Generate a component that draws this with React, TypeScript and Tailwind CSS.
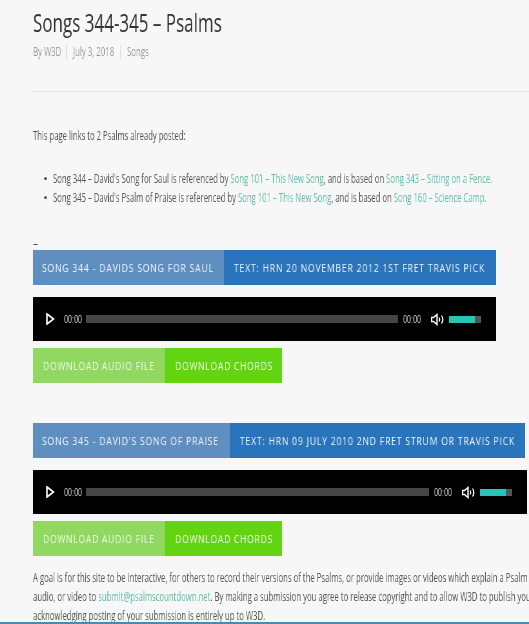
import React from 'react';

interface SongBlockProps {
  title: string;
  text: string;
  barWidth: string;
  titleWidth: string;
  playerWidth: string;
  className?: string;
}

// the source page is squeezed sideways, so text gets narrowed with scale-x
const Player: React.FC<{ width: string }> = ({ width }) => (
  <div className={`${width} h-[44px] bg-black flex items-center pl-[13px] pr-[15px] font-['Liberation_Sans',sans-serif] text-[10px] text-[#cfcfcf] mt-[12px]`}>
    {/* play button */}
    <svg width="9" height="12" viewBox="0 0 9 12" fill="none" stroke="#fff" strokeWidth="1.6" className="shrink-0">
      <path d="M1 1l6.5 5L1 11z" />
    </svg>
    <span className="ml-[9px] w-[18px] shrink-0"><span className="block w-max origin-left scale-x-[0.72] will-change-transform">00:00</span></span>
    <div className="ml-[4px] flex-1 h-[8px] bg-[#454545]"></div>
    <span className="ml-[5px] w-[18px] shrink-0"><span className="block w-max origin-left scale-x-[0.72] will-change-transform">00:00</span></span>
    {/* speaker */}
    <svg width="13" height="13" viewBox="0 0 13 13" fill="none" className="ml-[10px] shrink-0">
      <path d="M0.500 4.500h2L6 1.500v10L2.500 8.500h-2z" stroke="#fff" strokeWidth="1.400" />
      <path d="M8 4.500c.8 1.200.8 2.800 0 4M10.500 2.500c1.600 2.400 1.600 5.600 0 8" stroke="#fff" strokeWidth="1.200" />
    </svg>
    <div className="ml-[5px] w-[32px] h-[7px] bg-[#555] shrink-0">
      <div className="w-[26px] h-full bg-[#27c4b8]"></div>
    </div>
  </div>
);

const SongBlock: React.FC<SongBlockProps> = ({ title, text, barWidth, titleWidth, playerWidth, className }) => (
  <div className={className}>
    <div className={`${barWidth} h-[35px] flex bg-[#2a74bc] text-[#f0f5fa] text-[11px] font-medium tracking-[1.05px] font-['Open_Sans',sans-serif] whitespace-nowrap leading-[35px]`}>
      <div className={`${titleWidth} shrink-0 bg-[#5f8fc0] pl-[9px]`}><span className="block w-max origin-left scale-x-[0.78] will-change-transform">{title}</span></div>
      <div className="min-w-0 pl-[10px]"><span className="block w-max origin-left scale-x-[0.78] will-change-transform">{text}</span></div>
    </div>
    <Player width={playerWidth} />
    <div className="mt-[7px] flex h-[35px] w-[249px] text-[11px] font-medium tracking-[0.95px] text-[#f2faec] font-['Open_Sans',sans-serif] whitespace-nowrap leading-[35px]">
      <div className="w-[132px] shrink-0 bg-[#90d860] pl-[10px]"><span className="block w-max origin-left scale-x-[0.78] will-change-transform">DOWNLOAD AUDIO FILE</span></div>
      <div className="flex-1 min-w-0 bg-[#62d411] pl-[10px]"><span className="block w-max origin-left scale-x-[0.78] will-change-transform">DOWNLOAD CHORDS</span></div>
    </div>
  </div>
);

const Link: React.FC<{ children: React.ReactNode }> = ({ children }) => (
  <a className="text-[#5dbdaa]">{children}</a>
);

export default function App() {
  return (
    <div className="w-[529px] h-[624px] overflow-hidden bg-[#f7f7f7] font-['Open_Sans',sans-serif] text-[#555] relative">
      <div className="pl-[33px]">
        <h1 className="pt-[5px] pb-[1px] text-[25px] leading-[34px] text-[#333] whitespace-nowrap w-max origin-left scale-x-[0.68] will-change-transform">Songs 344-345 – Psalms</h1>

        <div className="mt-[3px] flex items-center h-[18px] text-[12px] text-[#999] whitespace-nowrap">
          <span className="w-[34px] border-r border-[#e0e0e0] h-[14px] leading-[14px]"><span className="block w-max origin-left scale-x-[0.65] will-change-transform">By W3D</span></span>
          <span className="w-[54px] pl-[6px] border-r border-[#e0e0e0] h-[14px] leading-[14px]"><span className="block w-max origin-left scale-x-[0.65] will-change-transform">July 3, 2018</span></span>
          <span className="pl-[6px] leading-[14px]"><span className="block w-max origin-left scale-x-[0.65] will-change-transform">Songs</span></span>
        </div>

        <div className="mt-[30px] border-t border-[#e2e2e2]"></div>

        <p className="mt-[34px] text-[12px] leading-[19px] whitespace-nowrap w-max origin-left scale-x-[0.64] will-change-transform">This page links to 2 Psalms already posted:</p>

        <ul className="mt-[24px] pl-[20px] text-[12px] leading-[19px] whitespace-nowrap list-none">
          <li className="relative">
            <span className="absolute left-[-9px] top-[8px] w-[3px] h-[3px] rounded-full bg-[#555]"></span>
            <span className="block w-max origin-left scale-x-[0.642] will-change-transform">Song 344 – David's Song for Saul is referenced by <Link>Song 101 – This New Song</Link>, and is based on <Link>Song 343 – Sitting on a Fence.</Link></span>
          </li>
          <li className="relative">
            <span className="absolute left-[-9px] top-[8px] w-[3px] h-[3px] rounded-full bg-[#555]"></span>
            <span className="block w-max origin-left scale-x-[0.642] will-change-transform">Song 345 – David's Psalm of Praise is referenced by <Link>Song 101 – This New Song</Link>, and is based on <Link>Song 160 – Science Camp.</Link></span>
          </li>
        </ul>

        <div className="mt-[27px] h-[18px] text-[10px] leading-[18px] text-[#333]">–</div>

        <SongBlock
          className="mt-[-2px]"
          title="SONG 344 - DAVIDS SONG FOR SAUL"
          text="TEXT: HRN 20 NOVEMBER 2012 1ST FRET TRAVIS PICK"
          barWidth="w-[463px]"
          titleWidth="w-[191px]"
          playerWidth="w-[463px]"
        />

        <SongBlock
          className="mt-[40px]"
          title="SONG 345 - DAVID'S SONG OF PRAISE"
          text="TEXT: HRN 09 JULY 2010 2ND FRET STRUM OR TRAVIS PICK"
          barWidth="w-[492px]"
          titleWidth="w-[197px]"
          playerWidth="w-[494px]"
        />

        <div className="mt-[12px] text-[12px] leading-[19px] whitespace-nowrap">
          <p className="w-max origin-left scale-x-[0.645] will-change-transform">A goal is for this site to be interactive, for others to record their versions of the Psalms, or provide images or videos which explain a Psalm</p>
          <p className="w-max origin-left scale-x-[0.645] will-change-transform">audio, or video to <Link>submit@psalmscountdown.net</Link>. By making a submission you agree to release copyright and to allow W3D to publish your</p>
          <p className="w-max origin-left scale-x-[0.645] will-change-transform">acknowledging posting of your submission is entirely up to W3D.</p>
        </div>
      </div>
      {/* footer edge */}
      <div className="absolute bottom-0 left-0 right-0 h-[2px] bg-[#4a8ab0]"></div>
    </div>
  );
}
